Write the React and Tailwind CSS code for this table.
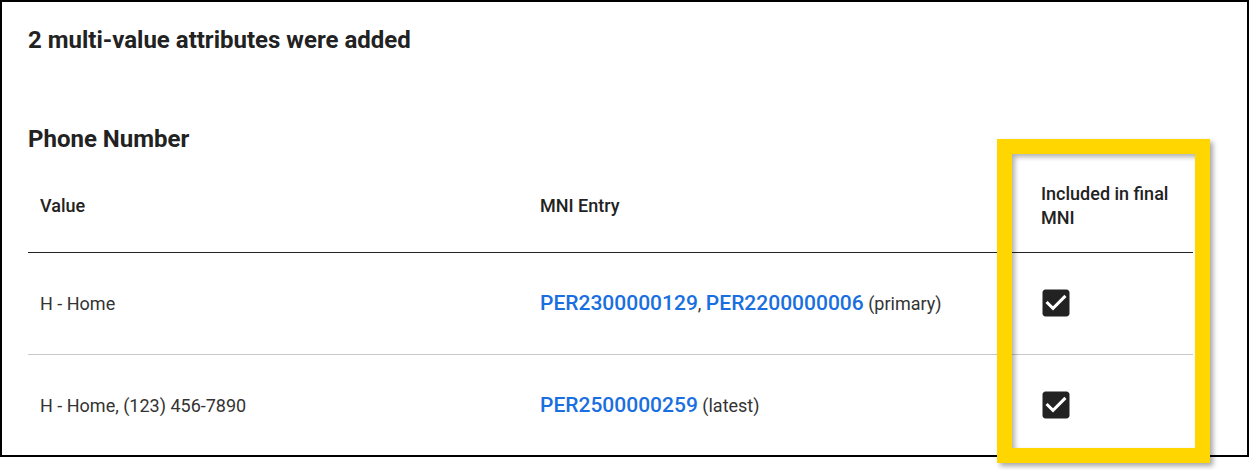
const rows = [
  {
    value: 'H - Home',
    entries: ['PER2300000129', 'PER2200000006'],
    note: '(primary)',
  },
  {
    value: 'H - Home, (123) 456-7890',
    entries: ['PER2500000259'],
    note: '(latest)',
  },
];

const CheckedBox = () => (
  <svg className="-ml-[3px] block" width="36" height="36" viewBox="0 0 24 24" fill="#222222">
    <path d="M19 3H5c-1.11 0-2 .9-2 2v14c0 1.1.89 2 2 2h14c1.11 0 2-.9 2-2V5c0-1.1-.89-2-2-2zm-9 14l-5-5 1.41-1.41L10 14.17l7.59-7.59L19 8l-9 9z" />
  </svg>
);

export default function App() {
  return (
    <div className="relative w-[1252px] h-[470px] bg-white font-['Roboto',sans-serif] text-[#222]">
      <div className="w-[1249px] h-[457px] border-2 border-black pl-[26px] overflow-hidden">
        <h2 className="pt-[22px] text-[24px] leading-[32px] font-bold">2 multi-value attributes were added</h2>
        <h3 className="mt-[67px] text-[24px] leading-[32px] font-bold">Phone Number</h3>

        <table className="w-[1165px] table-fixed border-collapse text-left text-[18px]">
          <colgroup>
            <col className="w-[500px]" />
            <col className="w-[501px]" />
            <col className="w-[164px]" />
          </colgroup>
          <thead>
            <tr className="h-[97px] border-b border-[#222]">
              <th className="px-3 pt-[5px] font-medium leading-6 align-middle">Value</th>
              <th className="px-3 pt-[5px] font-medium leading-6 align-middle">MNI Entry</th>
              <th className="px-3 pt-[5px] font-medium leading-6 align-middle">Included in final MNI</th>
            </tr>
          </thead>
          <tbody className="text-[#333]">
            {rows.map((row, i) => (
              <tr key={i} className={`h-[102px] ${i === 0 ? 'border-b border-[#c8c8c8]' : ''}`}>
                <td className="px-3 pt-[1px] leading-[27px] align-middle">{row.value}</td>
                <td className="px-3 pt-[1px] leading-[27px] align-middle">
                  {row.entries.map((id, j) => (
                    <span key={id}>
                      <a href="#" className="text-[#1a6fe0] text-[21px] font-medium">{id}</a>
                      {j < row.entries.length - 1 ? ', ' : ' '}
                    </span>
                  ))}
                  <span>{row.note}</span>
                </td>
                <td className="px-3 align-middle">
                  <CheckedBox />
                </td>
              </tr>
            ))}
          </tbody>
        </table>
      </div>

      {/* highlight annotation over the last column */}
      <div className="absolute left-[997px] top-[139px] w-[213px] h-[324px] border-[15px] border-[#ffd600] shadow-[3px_3px_5px_rgba(0,0,0,0.35),inset_3px_3px_5px_rgba(0,0,0,0.3)]" />
    </div>
  );
}
